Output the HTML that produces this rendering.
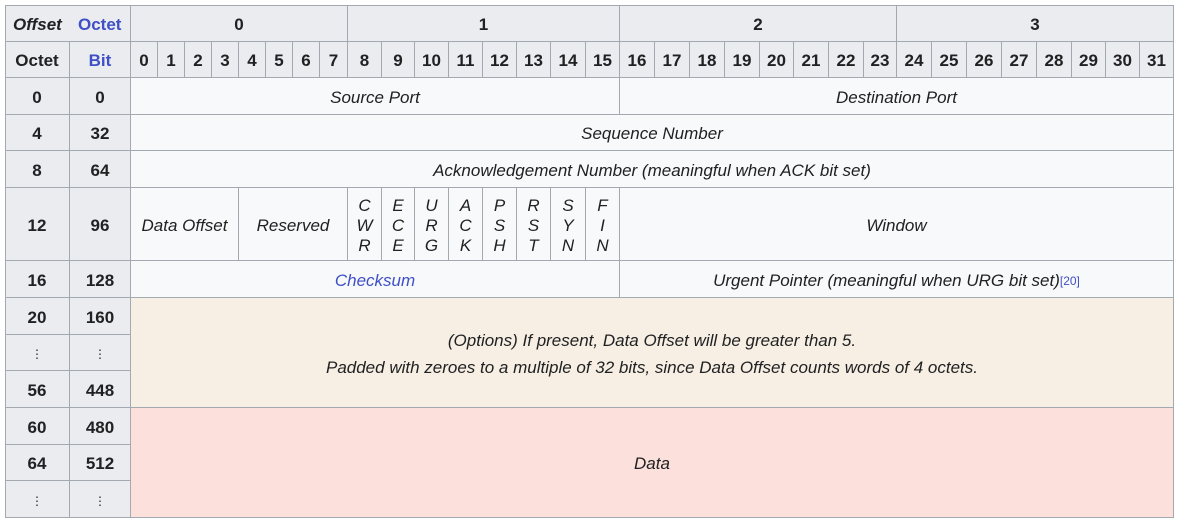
<!DOCTYPE html>
<html><head><meta charset="utf-8"><style>
body{margin:0;width:1178px;height:522px;background:#fff;font-family:"Liberation Sans",Arial,sans-serif;color:#202122;overflow:hidden}
#t{position:absolute;left:5px;top:5px;width:1169px;height:513px;border-top:1px solid #a2a9b1;border-left:1px solid #a2a9b1;box-sizing:border-box;z-index:5;pointer-events:none}
.c{position:absolute;box-sizing:border-box;border-right:1px solid #a2a9b1;border-bottom:1px solid #a2a9b1;display:flex;align-items:center;justify-content:center;text-align:center;font-size:17px;background:#f8f9fa;font-style:italic;padding-top:3px}
.h{background:#eaecf0;font-weight:bold;font-style:normal}
.b{color:#3f4fc6}
.fl{line-height:20px}
sup{font-size:12px;color:#3f4fc6;font-style:normal;vertical-align:8px;line-height:0}
</style></head><body>
<div id="t"></div>
<div id="cells"></div>
<script>
var B=[131,158,185,212,239,266,293,320,348,382,415,449,483,517,551,586,620,655,690,725,760,794,829,864,897,932,967,1002,1037,1072,1106,1140,1174];
var h='';
function c(x1,y1,x2,y2,txt,cls,bg){h+='<div class="c '+(cls||'')+'" style="left:'+x1+'px;top:'+y1+'px;width:'+(x2-x1)+'px;height:'+(y2-y1)+'px'+(bg?';background:'+bg:'')+'">'+txt+'</div>';}
c(5,5,131,42,'<span style="font-style:italic;position:absolute;left:8px;top:10px">Offset</span><span class="b" style="position:absolute;left:73px;top:10px">Octet</span>','h');
c(131,5,348,42,'0','h');c(348,5,620,42,'1','h');c(620,5,897,42,'2','h');c(897,5,1174,42,'3','h');
c(5,42,70,78,'Octet','h');c(70,42,131,78,'<span class="b">Bit</span>','h');
for(var i=0;i<32;i++)c(B[i],42,B[i+1],78,i,'h');
var L=[[78,115,'0','0'],[115,151,'4','32'],[151,188,'8','64'],[188,261,'12','96'],[261,298,'16','128'],[298,335,'20','160'],[335,371,'⋮','⋮'],[371,408,'56','448'],[408,445,'60','480'],[445,481,'64','512'],[481,518,'⋮','⋮']];
L.forEach(function(r){var w=r[2]=='⋮'?'font-weight:normal;font-size:12px':'';c(5,r[0],70,r[1],'<span style="'+w+'">'+r[2]+'</span>','h');c(70,r[0],131,r[1],'<span style="'+w+'">'+r[3]+'</span>','h');});
c(131,78,620,115,'Source Port');c(620,78,1174,115,'Destination Port');
c(131,115,1174,151,'Sequence Number');
c(131,151,1174,188,'Acknowledgement Number (meaningful when ACK bit set)');
c(131,188,239,261,'Data Offset');c(239,188,348,261,'Reserved');
var F=['C<br>W<br>R','E<br>C<br>E','U<br>R<br>G','A<br>C<br>K','P<br>S<br>H','R<br>S<br>T','S<br>Y<br>N','F<br>I<br>N'];
for(var i=0;i<8;i++)c(B[8+i],188,B[9+i],261,F[i],'fl');
c(620,188,1174,261,'Window');
c(131,261,620,298,'<span class="b">Checksum</span>');
c(620,261,1174,298,'Urgent Pointer (meaningful when URG bit set)<sup>[20]</sup>');
c(131,298,1174,408,'<div style="line-height:27px">(Options) If present, Data Offset will be greater than 5.<br>Padded with zeroes to a multiple of 32 bits, since Data Offset counts words of 4 octets.</div>','','#f7efe4');
c(131,408,1174,518,'Data','','#fce0dc');
document.getElementById('cells').innerHTML=h;
</script>
</body></html>
